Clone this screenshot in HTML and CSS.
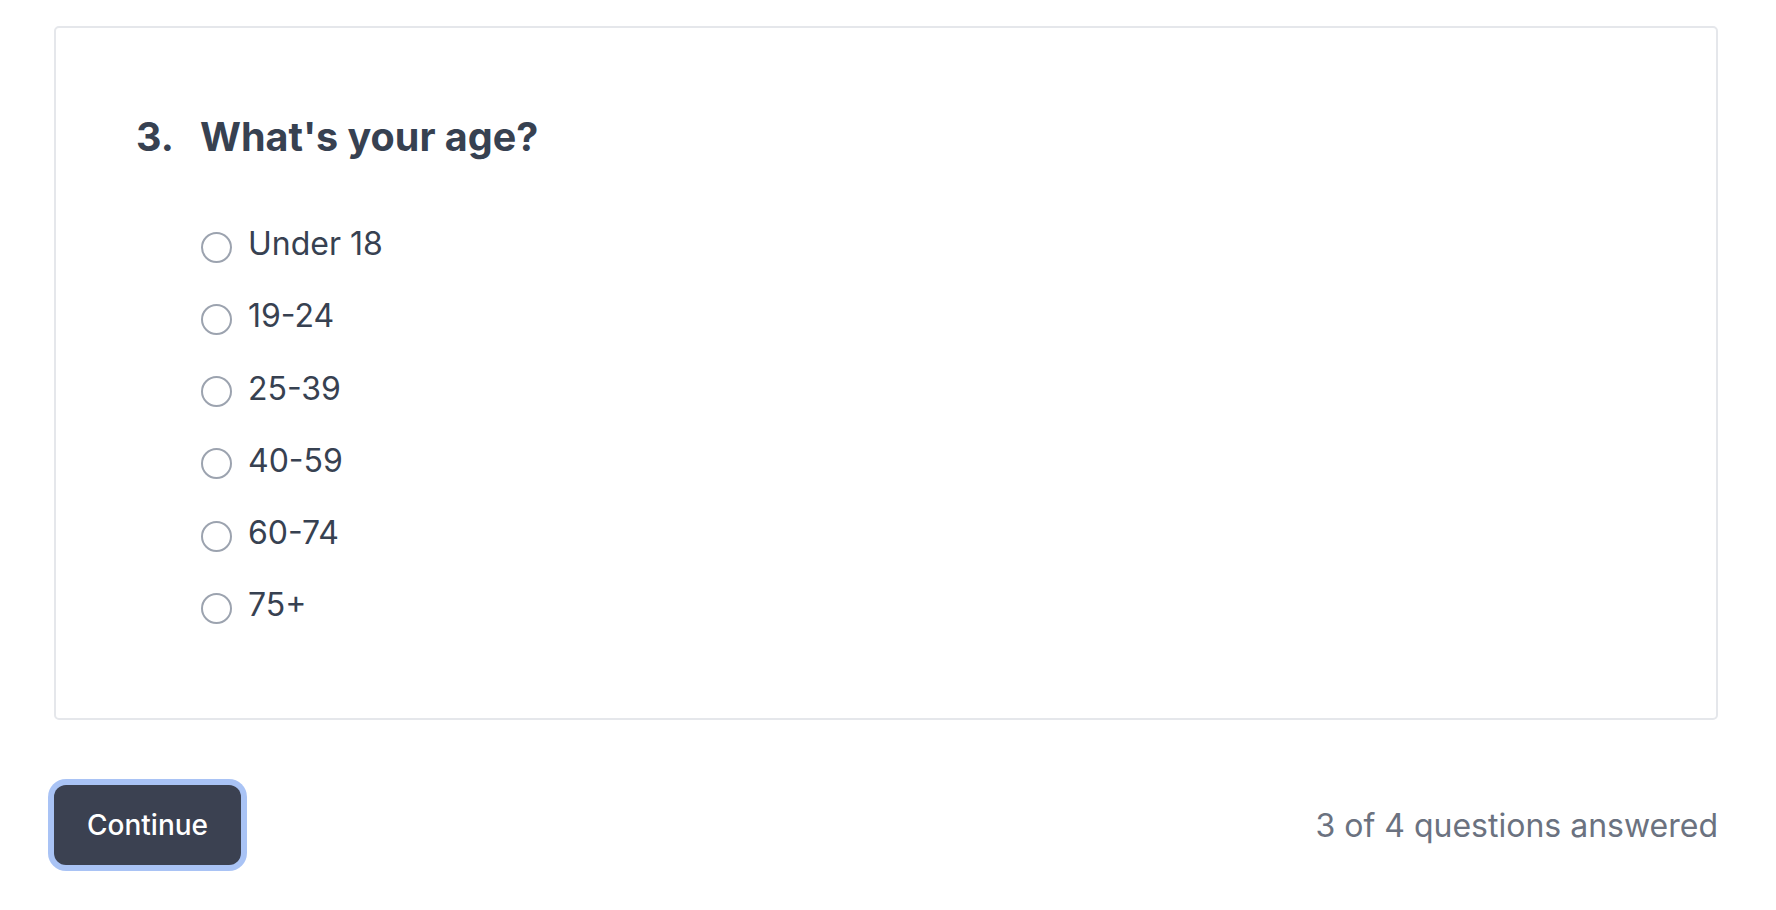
FILE: index.html
```html
<!DOCTYPE html>
<html lang="en">
<head>
    <meta charset="UTF-8">
    <meta name="viewport" content="width=device-width, initial-scale=1.0">
    <title>Survey</title>
    <link rel="stylesheet" href="styles.css">
</head>
<body>
    <div class="page">
        <div class="question-card">
            <h2 class="question">
                <span class="question-number">3.</span>
                <span class="question-text">What's your age?</span>
            </h2>
            <div class="options">
                <label class="option"><input type="radio" name="age" value="under-18"><span>Under 18</span></label>
                <label class="option"><input type="radio" name="age" value="19-24"><span>19-24</span></label>
                <label class="option"><input type="radio" name="age" value="25-39"><span>25-39</span></label>
                <label class="option"><input type="radio" name="age" value="40-59"><span>40-59</span></label>
                <label class="option"><input type="radio" name="age" value="60-74"><span>60-74</span></label>
                <label class="option"><input type="radio" name="age" value="75+"><span>75+</span></label>
            </div>
        </div>

        <div class="footer">
            <button class="continue">Continue</button>
            <span class="progress">3 of 4 questions answered</span>
        </div>
    </div>
</body>
</html>
```

FILE: styles.css
```css
:root {
    --text: #374151;
    --muted: #6b7280;
    --border: #e5e7eb;
    --radio: #9ca3af;
    --button: #3b4151;
    --ring: #a9c3f5;
}

* {
    margin: 0;
    padding: 0;
    box-sizing: border-box;
    font-family: Inter, 'Noto Sans', sans-serif;
}

body {
    background: white;
    color: var(--text);
}

.page {
    padding: 26px 58px 40px 54px;
}

.question-card {
    border: 2px solid var(--border);
    border-radius: 5px;
    padding: 85px 80px 91px;
}

.question {
    display: flex;
    font-size: 39.5px;
    line-height: 48px;
    font-weight: 700;
}

.question-number {
    width: 64px;
    flex-shrink: 0;
}

.options {
    display: flex;
    flex-direction: column;
    gap: 28.3px;
    margin: 61px 0 0 65px;
}

.option {
    display: flex;
    align-items: flex-start;
    gap: 16px;
    font-size: 32px;
    line-height: 44px;
    cursor: pointer;
}

.option input {
    appearance: none;
    width: 31px;
    height: 31px;
    margin-top: 9.5px;
    border: 2px solid var(--radio);
    border-radius: 50%;
    background: white;
    flex-shrink: 0;
}

.option input:checked {
    border-color: var(--button);
    border-width: 9px;
}

.footer {
    display: flex;
    justify-content: space-between;
    align-items: center;
    margin-top: 65px;
}

.continue {
    height: 80px;
    padding: 0 33px;
    border: none;
    border-radius: 12px;
    background-color: var(--button);
    color: white;
    font-size: 28px;
    font-weight: 500;
    box-shadow: 0 0 0 6px var(--ring);
    cursor: pointer;
}

.progress {
    font-size: 32px;
    color: var(--muted);
}
```
